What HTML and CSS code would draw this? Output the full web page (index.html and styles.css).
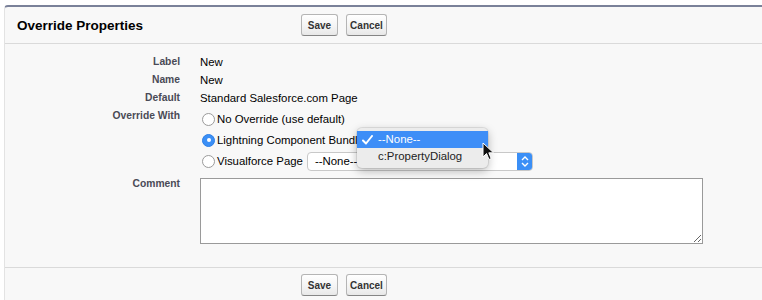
FILE: index.html
```html
<!DOCTYPE html>
<html>
<head>
<meta charset="utf-8">
<link rel="stylesheet" href="styles.css">
</head>
<body>
<div class="panel">
  <div class="pb-header">
    <h2 class="title">Override Properties</h2>
    <div class="btns">
      <button class="btn btn-save">Save</button>
      <button class="btn btn-cancel">Cancel</button>
    </div>
  </div>
  <div class="pb-body">
    <div class="row"><div class="lbl">Label</div><div class="val">New</div></div>
    <div class="row"><div class="lbl">Name</div><div class="val">New</div></div>
    <div class="row"><div class="lbl">Default</div><div class="val">Standard Salesforce.com Page</div></div>
    <div class="row row-override">
      <div class="lbl">Override With</div>
      <div class="val radios">
        <div class="radio-line"><span class="radio"></span><span>No Override (use default)</span></div>
        <div class="radio-line"><span class="radio on"></span><span>Lightning Component Bundle</span>
          <div class="menu">
            <div class="menu-item sel"><svg class="check" width="11" height="10" viewBox="0 0 11 10"><path d="M1 5.5 L4 8.5 L10 1" fill="none" stroke="#fff" stroke-width="2" stroke-linecap="round" stroke-linejoin="round"/></svg>--None--</div>
            <div class="menu-item">c:PropertyDialog</div>
          </div>
          <svg class="cursor" width="13" height="19" viewBox="0 0 13 19"><path d="M1 1 L1 15 L4.5 11.5 L7 17.5 L9.2 16.6 L6.8 10.8 L11.5 10.8 Z" fill="#111" stroke="#fff" stroke-width="1"/></svg>
        </div>
        <div class="radio-line"><span class="radio"></span><span>Visualforce Page</span>
          <div class="select"><span class="sel-text">--None--</span><span class="sel-arrow"><svg width="8" height="11" viewBox="0 0 8 11"><path d="M1 4 L4 1 L7 4 M1 7 L4 10 L7 7" fill="none" stroke="#fff" stroke-width="1.4"/></svg></span></div>
        </div>
      </div>
    </div>
    <div class="row row-comment">
      <div class="lbl">Comment</div>
      <div class="val"><textarea class="comment"></textarea></div>
    </div>
  </div>
  <div class="pb-footer">
    <div class="btns">
      <button class="btn btn-save">Save</button>
      <button class="btn btn-cancel">Cancel</button>
    </div>
  </div>
</div>
</body>
</html>
```

FILE: styles.css
```css
html, body {
  margin: 0;
  padding: 0;
  background: #ffffff;
  font-family: "Liberation Sans", Arial, sans-serif;
}
.panel {
  margin-left: 4px;
  margin-top: 5px;
  border-top: 2px solid #7a8199;
  border-left: 1px solid #e3e3e3;
  border-top-left-radius: 4px;
  background: #f8f8f8;
  height: 293px;
  position: relative;
}
.pb-header {
  display: grid;
  grid-template-columns: 296px auto;
  align-items: center;
  height: 36px;
  border-bottom: 1px solid #dadada;
}
.title {
  margin: 0;
  padding-left: 12px;
  font-size: 13.5px;
  font-weight: bold;
  color: #000;
}
.btns {
  display: flex;
  gap: 8px;
}
.btn {
  font-family: "Liberation Sans", Arial, sans-serif;
  font-size: 10px;
  font-weight: bold;
  color: #333;
  height: 22px;
  padding: 0;
  border: 1px solid #b5b5b5;
  border-bottom-color: #858585;
  border-radius: 3px;
  background: linear-gradient(#ffffff, #f3f3f3 60%, #e8e8e8);
}
.btn-save { width: 37px; }
.btn-cancel { width: 41px; }
.pb-body {
  padding-top: 9px;
  height: 224px;
  border-bottom: 1px solid #dadada;
  box-sizing: border-box;
}
.row {
  display: grid;
  grid-template-columns: 175px 1fr;
  column-gap: 20px;
  font-size: 11.4px;
  line-height: 18px;
}
.lbl {
  text-align: right;
  font-size: 10.3px;
  font-weight: bold;
  color: #4a4a56;
}
.val {
  color: #000;
}
.radios {
  display: flex;
  flex-direction: column;
  gap: 3px;
  margin-top: 3px;
}
.radio-line {
  display: flex;
  align-items: center;
  gap: 2px;
  height: 18px;
  position: relative;
}
.radio {
  width: 13px;
  height: 13px;
  border-radius: 50%;
  border: 1px solid #9a9a9a;
  background: #fff;
  box-sizing: border-box;
  margin-left: 2px;
  display: inline-block;
  position: relative;
}
.radio.on {
  background: #3b8ff6;
  border-color: #2c7fe6;
}
.radio.on::after {
  content: "";
  position: absolute;
  width: 4px;
  height: 4px;
  background: #fff;
  border-radius: 50%;
  left: 3.5px;
  top: 3.5px;
}
.select {
  margin-left: 2px;
  width: 226px;
  height: 19px;
  border: 1px solid #c8c8c8;
  border-radius: 4px;
  background: #fff;
  box-sizing: border-box;
  display: flex;
  align-items: center;
  justify-content: space-between;
  overflow: hidden;
}
.sel-text {
  padding-left: 7px;
  font-size: 11.4px;
  color: #000;
}
.sel-arrow {
  width: 16px;
  height: 19px;
  background: #3b8ff6;
  display: flex;
  align-items: center;
  justify-content: center;
  margin-right: -1px;
}
.menu {
  position: absolute;
  left: 157px;
  top: -3px;
  width: 131px;
  padding: 3px 0;
  background: #ececec;
  border-radius: 5px;
  box-shadow: 0 3px 10px rgba(0,0,0,0.28), 0 0 0 1px rgba(0,0,0,0.08);
  z-index: 2;
}
.menu-item {
  height: 17px;
  line-height: 17px;
  padding-left: 21px;
  font-size: 11.4px;
  color: #222;
  position: relative;
}
.menu-item.sel {
  background: #3e8ef7;
  color: #fff;
}
.check {
  position: absolute;
  left: 5px;
  top: 4px;
}
.cursor {
  position: absolute;
  left: 282px;
  top: 11px;
  z-index: 3;
}
.row-comment {
  margin-top: 8px;
}
.row-comment .lbl {
  line-height: 12px;
}
.comment {
  display: block;
  width: 503px;
  height: 66px;
  margin: 0;
  border: 1px solid #9a9a9a;
  background: #fff;
  box-sizing: border-box;
  resize: both;
}
.pb-footer {
  height: 34px;
  display: flex;
  align-items: center;
  padding-left: 296px;
}
```
